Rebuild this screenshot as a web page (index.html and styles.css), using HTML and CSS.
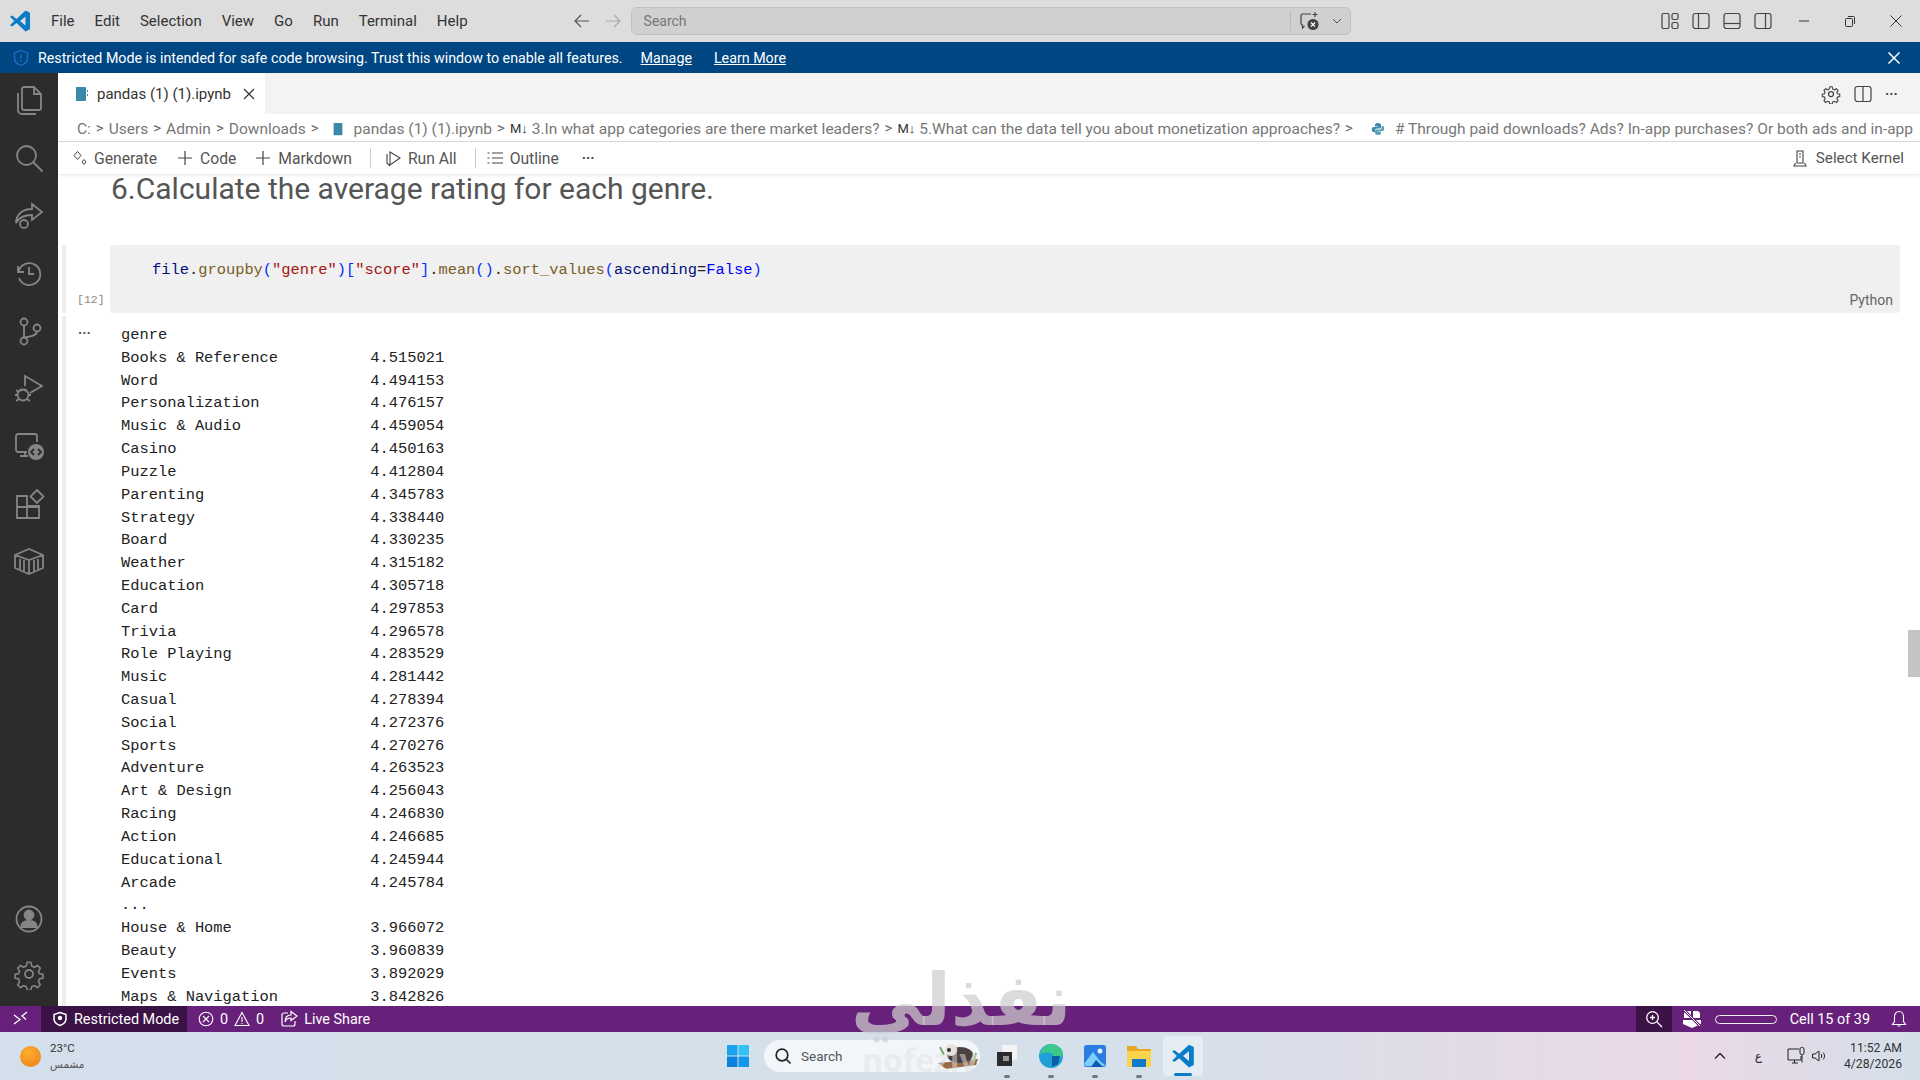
FILE: index.html
```html
<!DOCTYPE html>
<html lang="en">
<head>
  <meta charset="UTF-8" />
  <title>pandas (1) (1).ipynb - Visual Studio Code</title>
  <link rel="stylesheet" href="styles.css">
</head>
<body>
  <!-- title bar -->
  <div class="titlebar">
    <svg class="logo" width="24" height="24" viewBox="0 0 24 24"><path fill="#0a7cc7" d="M17.5 1.5 22 3.7v16.6l-4.500 2.200-9-8.400-4.300 3.300L2 16.300 6.300 12 2 7.700l2.200-1.100 4.300 3.300zM17.500 7.500 12 12l5.500 4.500z"/></svg>
    <div class="menu">
      <span>File</span><span>Edit</span><span>Selection</span><span>View</span><span>Go</span><span>Run</span><span>Terminal</span><span>Help</span>
    </div>
    <svg class="nav-back" width="18" height="18" viewBox="0 0 18 18" fill="none" stroke="#555" stroke-width="1.200"><path d="M16 9H2M8 3 2 9l6 6"/></svg>
    <svg class="nav-fwd" width="18" height="18" viewBox="0 0 18 18" fill="none" stroke="#aaa" stroke-width="1.200"><path d="M2 9h14M10 3l6 6-6 6"/></svg>
    <div class="searchbox">
      <span class="searchbox-text">Search</span>
      <span class="searchbox-sep"></span>
      <svg width="22" height="22" viewBox="0 0 22 22" fill="none" stroke="#444" stroke-width="1.200"><path d="M13 4H4.500A1.500 1.500 0 0 0 3 5.500v8A1.500 1.500 0 0 0 4.500 15v3l2-2"/><path d="M17 2v5M14.500 4.500h5"/><circle cx="15" cy="14.500" r="5" fill="#444"/><path d="m13 12.500 4 4M17 12.500l-4 4" stroke="#fff"/></svg>
      <svg class="searchbox-chev" width="12" height="12" viewBox="0 0 12 12" fill="none" stroke="#555"><path d="m2 4 4 4 4-4"/></svg>
    </div>
    <div class="layout-icons">
      <svg width="20" height="20" viewBox="0 0 20 20" fill="none" stroke="#444" stroke-width="1.200"><rect x="2" y="2.500" width="7" height="15" rx="1.500"/><rect x="12" y="2.500" width="6" height="6" rx="1.500"/><rect x="12" y="11.500" width="6" height="6" rx="1.500"/></svg>
      <svg width="20" height="20" viewBox="0 0 20 20" fill="none" stroke="#444" stroke-width="1.200"><rect x="2" y="2.500" width="16" height="15" rx="2.500"/><path d="M7.500 2.500v15"/></svg>
      <svg width="20" height="20" viewBox="0 0 20 20" fill="none" stroke="#444" stroke-width="1.200"><rect x="2" y="2.500" width="16" height="15" rx="2.500"/><path d="M2 12.500h16"/></svg>
      <svg width="20" height="20" viewBox="0 0 20 20" fill="none" stroke="#444" stroke-width="1.200"><rect x="2" y="2.500" width="16" height="15" rx="2.500"/><path d="M12.500 2.500v15"/></svg>
    </div>
    <div class="window-btns">
      <svg width="14" height="14" viewBox="0 0 14 14" stroke="#333"><path d="M2 7h10"/></svg>
      <svg width="14" height="14" viewBox="0 0 14 14" fill="none" stroke="#333"><rect x="2.500" y="4.500" width="7" height="8" rx="1"/><path d="M5 2.500h5.500a1 1 0 0 1 1 1V10"/></svg>
      <svg width="14" height="14" viewBox="0 0 14 14" stroke="#333"><path d="m1.500 1.500 11 11M12.500 1.500l-11 11"/></svg>
    </div>
  </div>

  <!-- restricted mode banner -->
  <div class="banner">
    <svg width="18" height="18" viewBox="0 0 18 18" fill="none" stroke="#1a6fd0" stroke-width="1.300"><path d="M9 1.500 15.500 4v5c0 3.800-3 6.300-6.500 7.500C5.500 15.300 2.500 12.800 2.500 9V4z"/><path d="M9 5.500v4M9 11v1.500"/></svg>
    <span class="banner-text">Restricted Mode is intended for safe code browsing. Trust this window to enable all features.</span>
    <a class="banner-link">Manage</a>
    <a class="banner-link banner-learn">Learn More</a>
    <svg class="banner-close" width="14" height="14" viewBox="0 0 14 14" stroke="#fff" stroke-width="1.500"><path d="m1.500 1.500 11 11M12.500 1.500l-11 11"/></svg>
  </div>

  <div class="main">
    <!-- activity bar -->
    <div class="activity">
      <div class="act-item"><svg width="32" height="32" viewBox="0 0 32 32"><path d="M11 3h10l7 7v14a2 2 0 0 1-2 2H11a2 2 0 0 1-2-2V5a2 2 0 0 1 2-2zM21 3v7h7M5 9v17a4 4 0 0 0 4 4h14"/></svg></div>
      <div class="act-item"><svg width="32" height="32" viewBox="0 0 32 32"><circle cx="13.500" cy="13.500" r="9.500"/><path d="m20.500 20.500 9 9"/></svg></div>
      <div class="act-item"><svg width="32" height="32" viewBox="0 0 32 32"><path d="M19 5l10 8-10 8v-5C11 16 6 18 3 24c0-8 6-14 16-14z"/><circle cx="11" cy="25" r="4"/></svg></div>
      <div class="act-item"><svg width="32" height="32" viewBox="0 0 32 32"><path d="M5 9v6h6M5.500 15A11 11 0 1 1 6 21"/><path d="M16 10v7h5"/></svg></div>
      <div class="act-item"><svg width="32" height="32" viewBox="0 0 32 32"><circle cx="11" cy="7" r="3.500"/><circle cx="11" cy="26" r="3.500"/><circle cx="24" cy="13" r="3.500"/><path d="M11 10.500v12M24 16.500c0 4-6 5-13 6"/></svg></div>
      <div class="act-item"><svg width="32" height="32" viewBox="0 0 32 32"><path d="M12 14V4l17 10-12 7"/><circle cx="10" cy="23" r="5.500"/><path d="M7 17l2 2M13 17l-2 2M2 23h3M15 23h3M3 29l3-2M17 29l-3-2M3 18l3 2"/></svg></div>
      <div class="act-item"><svg width="32" height="32" viewBox="0 0 32 32"><path d="M14 22H5a2 2 0 0 1-2-2V6a2 2 0 0 1 2-2h17a2 2 0 0 1 2 2v6M12 22v4M7 26h8"/><circle cx="23" cy="22" r="8" fill="#858585" stroke="none"/><path d="m21 19-3 3 3 3M25 19l3 3-3 3" stroke="#2c2c2c"/></svg></div>
      <div class="act-item"><svg width="32" height="32" viewBox="0 0 32 32"><path d="M14 8H4v22h22V18H14zM4 19h22M14 8v22"/><path d="m24 2 6.500 6.500L24 15l-6.500-6.500z"/></svg></div>
      <div class="act-item"><svg width="32" height="32" viewBox="0 0 32 32"><path d="M2 10 16 4l14 6v13l-14 6-14-6zM2 10l14 5 14-5M16 15v14M7 14v11M11 15v12M21 15v12M25 14v11"/></svg></div>
      <div class="act-item act-bottom"><svg width="32" height="32" viewBox="0 0 32 32"><circle cx="16" cy="16" r="12.500"/><circle cx="16" cy="12" r="4.500" fill="#858585"/><path d="M8 25c0-5 3-7 8-7s8 2 8 7" fill="#858585"/></svg></div>
      <div class="act-item"><svg width="32" height="32" viewBox="0 0 32 32"><circle cx="16" cy="16" r="4"/><path d="M14 3h4l1 4 3 1.500 3.500-2 3 3-2 3.500 1 2.500 4 1v4l-4 1-1 3 2 3.500-3 3-3.500-2-3 1-1 4h-4l-1-4-3-1-3.500 2-3-3 2-3.500-1-3-4-1v-4l4-1 1-2.500-2-3.500 3-3 3.500 2 3-1.500z" transform="translate(1.600 1.600) scale(.9)"/></svg></div>
    </div>

    <div class="editor">
      <div class="tabs">
        <div class="tab">
          <svg width="16" height="16" viewBox="0 0 16 16"><path fill="#3d87a8" d="M3 1h9a1 1 0 0 1 1 1v12a1 1 0 0 1-1 1H3z"/><path fill="#3d87a8" d="M14 4h1v2h-1zM14 8h1v2h-1z"/></svg>
          <span>pandas (1) (1).ipynb</span>
          <svg class="tab-close" width="14" height="14" viewBox="0 0 14 14" stroke="#333" stroke-width="1.200"><path d="m2 2 10 10M12 2 2 12"/></svg>
        </div>
        <div class="tab-actions">
          <svg width="20" height="20" viewBox="0 0 32 32" fill="none" stroke="#444" stroke-width="2"><circle cx="16" cy="16" r="4"/><path d="M14 3h4l1 4 3 1.500 3.500-2 3 3-2 3.500 1 2.500 4 1v4l-4 1-1 3 2 3.500-3 3-3.500-2-3 1-1 4h-4l-1-4-3-1-3.500 2-3-3 2-3.500-1-3-4-1v-4l4-1 1-2.500-2-3.500 3-3 3.500 2 3-1.500z" transform="translate(1.600 1.600) scale(.9)"/></svg>
          <svg width="20" height="20" viewBox="0 0 20 20" fill="none" stroke="#444" stroke-width="1.200"><rect x="2" y="2.500" width="16" height="15" rx="2.500"/><path d="M10 2.500v15"/></svg>
          <span class="dots">···</span>
        </div>
      </div>

      <div class="crumbs">
        <span>C:</span><i>&gt;</i><span>Users</span><i>&gt;</i><span>Admin</span><i>&gt;</i><span>Downloads</span><i>&gt;</i>
        <svg class="crumb-nb" width="14" height="14" viewBox="0 0 16 16"><path fill="#3d87a8" d="M3 1h9a1 1 0 0 1 1 1v12a1 1 0 0 1-1 1H3z"/></svg>
        <span>pandas (1) (1).ipynb</span><i>&gt;</i><b>M↓</b><span>3.In what app categories are there market leaders?</span><i>&gt;</i><b>M↓</b><span>5.What can the data tell you about monetization approaches?</span><i>&gt;</i>
        <svg class="crumb-py" width="14" height="14" viewBox="0 0 14 14"><path fill="#3d87a8" d="M7 1C4.500 1 4 2 4 3v1.500h3.200V5H2.500C1.300 5 .8 6 .8 7.500S1.300 10 2.500 10H4V8.300C4 7.300 4.800 6.500 5.800 6.500h2.600C9.300 6.500 10 5.800 10 5V3c0-1-1-2-3-2z"/><path fill="#5b9fba" d="M7 13c2.500 0 3-1 3-2V9.500H6.800V9h4.700c1.200 0 1.700-1 1.700-2.500S12.700 4 11.500 4H10.500v1.700c0 1-.8 1.800-1.800 1.800H6c-.9 0-2 .7-2 1.500v2c0 1 1 2 3 2z"/></svg>
        <span># Through paid downloads? Ads? In-app purchases? Or both ads and in-app</span>
      </div>

      <div class="toolbar">
        <div class="tool tool-gen">
          <svg width="16" height="16" viewBox="0 0 16 16" fill="none" stroke="#444"><path d="m5.500 1.500 3.500 4-3.500 4-3.500-4zM12 9.500l2 2.500-2 2.500-2-2.500z"/></svg>
          <span>Generate</span>
        </div>
        <div class="tool">
          <svg width="18" height="18" viewBox="0 0 18 18" stroke="#444" stroke-width="1.200"><path d="M9 2v14M2 9h14"/></svg>
          <span>Code</span>
        </div>
        <div class="tool">
          <svg width="18" height="18" viewBox="0 0 18 18" stroke="#444" stroke-width="1.200"><path d="M9 2v14M2 9h14"/></svg>
          <span>Markdown</span>
        </div>
        <span class="tool-sep"></span>
        <div class="tool">
          <svg width="18" height="18" viewBox="0 0 18 18" fill="none" stroke="#444" stroke-width="1.100"><path d="M6 3l10 6-10 7zM3 5v9l3 3"/></svg>
          <span>Run All</span>
        </div>
        <span class="tool-sep tool-sep-2"></span>
        <div class="tool">
          <svg width="18" height="18" viewBox="0 0 18 18" stroke="#444" stroke-width="1.200"><path d="M6 4h11M6 9h11M6 14h11M1.500 4h2M1.500 9h2M1.500 14h2"/></svg>
          <span>Outline</span>
        </div>
        <span class="dots tool-dots">···</span>
        <div class="tool tool-kernel">
          <svg width="18" height="18" viewBox="0 0 18 18" fill="none" stroke="#444" stroke-width="1.100"><path d="M6 2h6v12H6zM8 5h2M8 8h2M4.500 14 3 17h12l-1.500-3"/></svg>
          <span>Select Kernel</span>
        </div>
      </div>

      <div class="notebook">
        <h2 class="md-heading">6.Calculate the average rating for each genre.</h2>
        <div class="cell">
          <div class="cell-bar"></div>
          <div class="cell-gutter">[12]</div>
          <div class="cell-code">
            <code><span class="var">file</span>.<span class="fn">groupby</span><span class="br">(</span><span class="str">"genre"</span><span class="br">)[</span><span class="str">"score"</span><span class="br">]</span>.<span class="fn">mean</span><span class="br">()</span>.<span class="fn">sort_values</span><span class="br">(</span><span class="var">ascending</span>=<span class="kw">False</span><span class="br">)</span></code>
            <span class="lang">Python</span>
          </div>
        </div>
        <div class="cell cell-output">
          <div class="cell-bar"></div>
          <div class="cell-gutter out-dots">···</div>
<pre class="output">genre
Books &amp; Reference          4.515021
Word                       4.494153
Personalization            4.476157
Music &amp; Audio              4.459054
Casino                     4.450163
Puzzle                     4.412804
Parenting                  4.345783
Strategy                   4.338440
Board                      4.330235
Weather                    4.315182
Education                  4.305718
Card                       4.297853
Trivia                     4.296578
Role Playing               4.283529
Music                      4.281442
Casual                     4.278394
Social                     4.272376
Sports                     4.270276
Adventure                  4.263523
Art &amp; Design               4.256043
Racing                     4.246830
Action                     4.246685
Educational                4.245944
Arcade                     4.245784
...
House &amp; Home               3.966072
Beauty                     3.960839
Events                     3.892029
Maps &amp; Navigation          3.842826</pre>
        </div>
        <div class="scroll-thumb"></div>
      </div>
    </div>
  </div>

  <!-- status bar -->
  <div class="statusbar">
    <div class="st-remote"><svg width="16" height="16" viewBox="0 0 16 16" fill="none" stroke="#fff" stroke-width="1.300"><path d="m1 13 6-4.500L1 4M14 1 9 5l4 3.500"/></svg></div>
    <div class="st-restricted">
      <svg width="16" height="16" viewBox="0 0 16 16" fill="none" stroke="#fff" stroke-width="1.500"><path d="M8 1.500 14 3.500v4.500c0 3.200-2.800 5.300-6 6.500C4.800 13.300 2 11.200 2 8V3.500z"/><circle cx="8" cy="7" r="1.500" fill="#fff"/></svg>
      <span>Restricted Mode</span>
    </div>
    <div class="st-item st-problems">
      <svg width="16" height="16" viewBox="0 0 16 16" fill="none" stroke="#fff" stroke-width="1.100"><circle cx="8" cy="8" r="6.800"/><path d="m5 5 6 6M11 5l-6 6"/></svg>
      <span>0</span>
      <svg width="16" height="16" viewBox="0 0 16 16" fill="none" stroke="#fff" stroke-width="1.100"><path d="M8 1.500 15 14.500H1zM8 6v5M8 12v1"/></svg>
      <span>0</span>
    </div>
    <div class="st-item st-live">
      <svg width="18" height="18" viewBox="0 0 18 18" fill="none" stroke="#fff" stroke-width="1.200"><path d="M8 3H4a2 2 0 0 0-2 2v9a2 2 0 0 0 2 2h9a2 2 0 0 0 2-2v-3"/><path d="M11 1.500 17 6l-6 4.500V8C8 8 6 9 5 12c0-4 2-7 6-7z"/></svg>
      <span>Live Share</span>
    </div>
    <div class="st-zoom"><svg width="18" height="18" viewBox="0 0 18 18" fill="none" stroke="#fff" stroke-width="1.300"><circle cx="7.500" cy="7.500" r="5.800"/><path d="m12 12 5 5M5 7.500h5M7.500 5v5"/></svg></div>
    <svg class="st-copilot" width="22" height="20" viewBox="0 0 22 20" fill="#fff"><path d="M5 2h5v7H3V4zM12 2h5l2 2v5h-7zM2 11h18v4l-9 4-9-4z"/><path d="M3 1l16 16" stroke="#68217a" stroke-width="2.500"/><path d="M3 1l16 16" stroke="#fff" stroke-width="1"/></svg>
    <div class="st-pill"></div>
    <span class="st-cell">Cell 15 of 39</span>
    <svg class="st-bell" width="18" height="18" viewBox="0 0 18 18" fill="none" stroke="#fff" stroke-width="1.100"><path d="M9 1.500c3 0 4.500 2.500 4.500 5v5l2 3h-13l2-3v-5c0-2.500 1.500-5 4.500-5zM7.500 16h3"/></svg>
  </div>

  <!-- windows taskbar -->
  <div class="taskbar">
    <div class="weather">
      <span class="sun"></span>
      <div class="weather-text">
        <span>23°C</span>
        <span class="weather-sub" lang="ar">مشمس</span>
      </div>
    </div>
    <div class="task-center">
      <svg class="win-logo" width="24" height="24" viewBox="0 0 24 24"><path fill="#1aa3ec" d="M1 1h10.500v10.500H1z"/><path fill="#32c0f7" d="M12.500 1H23v10.500H12.500z"/><path fill="#0c82dc" d="M1 12.500h10.500V23H1z"/><path fill="#1098ea" d="M12.500 12.500H23V23H12.500z"/></svg>
      <div class="task-search">
        <svg width="18" height="18" viewBox="0 0 18 18" fill="none" stroke="#222" stroke-width="1.700"><circle cx="8" cy="8" r="5.800"/><path d="m12.500 12.500 4 4"/></svg>
        <span>Search</span>
        <svg class="task-art" width="44" height="30" viewBox="0 0 44 30"><path d="M2 22 42 18l-2 6-30 4z" fill="#9a6a48"/><ellipse cx="24" cy="14" rx="13" ry="8" fill="#4a4040"/><circle cx="15" cy="9" r="6" fill="#e8e4dc"/><circle cx="13" cy="9" r="2" fill="#333"/><path d="M4 6l4 8M40 12l-3 10" stroke="#7aa85c" stroke-width="2"/></svg>
      </div>
      <div class="task-app">
        <svg width="24" height="24" viewBox="0 0 24 24"><path fill="#f4f4f4" d="M7 1h15v15H7z"/><path fill="#2b2b2b" d="M2 8h15v14H2z"/><path fill="#999" d="M8 12h6v5H8z"/></svg>
        <span class="task-dot"></span>
      </div>
      <div class="task-app">
        <svg width="26" height="26" viewBox="0 0 26 26"><circle cx="13" cy="13" r="12" fill="#1f9ed8"/><path d="M1.500 12C3 5 8 1 13 1c6 0 11 4 12 9 .300 3-3 5-7 5-3 0-4-2-3-4-4-2-11-2-13.500 1z" fill="#3bc88a"/><path d="M14 13h8l-2 8-6 3z" fill="#0b5fa5"/></svg>
        <span class="task-dot"></span>
      </div>
      <div class="task-app">
        <svg width="24" height="24" viewBox="0 0 24 24"><rect x="1" y="1" width="22" height="22" rx="2.500" fill="#2a7de1"/><circle cx="17" cy="7" r="2.500" fill="#dff1ff"/><path d="M1 20 10 8l7 9 6 5H3z" fill="#7cd0f7"/><path d="M8 23l5-7 7 7z" fill="#0f58b8"/></svg>
        <span class="task-dot"></span>
      </div>
      <div class="task-app">
        <svg width="26" height="24" viewBox="0 0 26 24"><path fill="#e9a824" d="M1 2h9l2 3h13v3H1z"/><path fill="#fcd34d" d="M1 7h24v15a1 1 0 0 1-1 1H2a1 1 0 0 1-1-1z"/><path fill="#1279c8" d="M6 15h14v8H6z"/></svg>
        <span class="task-dot"></span>
      </div>
      <div class="task-app task-active">
        <svg width="26" height="26" viewBox="0 0 24 24"><path fill="#0a7cc7" d="M17.500 1.500 22 3.700v16.600l-4.500 2.200-9-8.400-4.300 3.300L2 16.300 6.300 12 2 7.700l2.200-1.100 4.300 3.300zM17.500 7.500 12 12l5.500 4.500z"/></svg>
        <span class="task-bar"></span>
      </div>
    </div>
    <div class="tray">
      <svg width="14" height="14" viewBox="0 0 14 14" fill="none" stroke="#222" stroke-width="1.300"><path d="m2 9.500 5-5 5 5"/></svg>
      <span class="tray-lang" lang="ar">ع</span>
      <svg class="tray-net" width="20" height="20" viewBox="0 0 20 20" fill="none" stroke="#222"><path d="M13 3H2v11h13v-4M6 17h6M8.500 14v3"/><rect x="14" y="1.500" width="4" height="7" rx="1.500"/><path d="M16 8.500v8"/></svg>
      <svg width="16" height="16" viewBox="0 0 16 16" fill="none" stroke="#222"><path d="M1.500 6v4h2.500l4 3V3L4 6zM10 6c1 1 1 3 0 4M12 4.500c2 2 2 5 0 7"/></svg>
      <div class="clock"><span>11:52 AM</span><span>4/28/2026</span></div>
    </div>
  </div>

  <!-- watermark over the page -->
  <div class="wm-ar" lang="ar">نفذلي</div>
  <div class="wm-en">nofezly</div>
</body>
</html>
```

FILE: styles.css
```css
* {
  box-sizing: border-box;
}

body {
  margin: 0;
  width: 1920px;
  height: 1080px;
  overflow: hidden;
  position: relative;
  font-family: Roboto, "Noto Sans", sans-serif;
  font-size: 15px;
  color: #444;
  background: white;
}

svg {
  flex: none;
  display: block;
}

/* title bar */
.titlebar {
  height: 42px;
  background: #dddddd;
  display: flex;
  align-items: center;
}

.logo {
  margin-left: 8px;
}

.menu {
  display: flex;
  margin-left: 19px;
  gap: 20px;
  color: #333;
  font-size: 15px;
}

.nav-back {
  margin-left: 105px;
}

.nav-fwd {
  margin-left: 13px;
}

.searchbox {
  margin-left: 9px;
  width: 720px;
  height: 28px;
  background: #d0d0d0;
  border: 1px solid #c0c0c0;
  border-radius: 6px;
  display: flex;
  align-items: center;
  padding: 0 7px 0 12px;
}

.searchbox-text {
  color: #777;
  font-size: 14px;
  flex: 1;
}

.searchbox-sep {
  width: 1px;
  height: 20px;
  background: #bbb;
  margin-right: 7px;
}

.searchbox-chev {
  margin-left: 11px;
}

.layout-icons {
  display: flex;
  gap: 11px;
  margin-left: 309px;
}

.window-btns {
  display: flex;
  gap: 32px;
  margin-left: 24px;
}

/* banner */
.banner {
  height: 31px;
  background: #004682;
  color: white;
  display: flex;
  align-items: center;
  padding-left: 12px;
  font-size: 14.250px;
}

.banner-text {
  margin-left: 8px;
}

.banner-link {
  margin-left: 18px;
  text-decoration: underline;
}

.banner-learn {
  margin-left: 22px;
}

.banner-close {
  margin-left: auto;
  margin-right: 19px;
}

/* main area */
.main {
  height: 933px;
  display: flex;
}

.activity {
  width: 58px;
  background: #2c2c2c;
  display: flex;
  flex-direction: column;
  padding-bottom: 3px;
}

.act-item {
  height: 57.700px;
  display: flex;
  align-items: center;
  justify-content: center;
}

.act-item:first-child {
  margin-top: -2px;
}

.act-item svg {
  fill: none;
  stroke: #858585;
  stroke-width: 1.800;
}

.act-bottom {
  margin-top: auto;
  margin-bottom: -3px;
}

.editor {
  flex: 1;
  min-width: 0;
  display: flex;
  flex-direction: column;
}

.tabs {
  height: 41px;
  background: #f3f3f3;
  display: flex;
  align-items: center;
}

.tab {
  width: 207px;
  height: 100%;
  background: white;
  display: flex;
  align-items: center;
  padding-left: 15px;
  gap: 8px;
  color: #333;
}

.tab-close {
  margin-left: 3px;
}

.tab-actions {
  margin-left: auto;
  display: flex;
  align-items: center;
  gap: 12px;
  padding-right: 17px;
}

.dots {
  font-weight: bold;
  font-size: 14px;
  color: #444;
  width: 18px;
}

.crumbs {
  height: 28px;
  display: flex;
  align-items: center;
  padding: 2px 0 0 19px;
  white-space: nowrap;
  overflow: hidden;
  color: #777;
  border-bottom: 1px solid #dadada;
  font-size: 15.500px;
}

.crumbs i {
  font-style: normal;
  margin: 0 5px;
  font-size: 15px;
  line-height: 1;
  color: #666;
}

.crumbs b {
  font-weight: 400;
  color: #333;
  margin-right: 4px;
  font-size: 13px;
}

.crumb-nb {
  margin: 0 9px 0 7px;
}

.crumb-py {
  margin: 0 10px 0 13px;
}

.toolbar {
  height: 33px;
  display: flex;
  align-items: center;
  padding-left: 14px;
  border-bottom: 1px solid #eeeeee;
  box-shadow: 0 1px 3px rgba(0, 0, 0, 0.06);
  position: relative;
  background: white;
  font-size: 15.700px;
  color: #555;
}

.tool {
  display: flex;
  align-items: center;
  gap: 6px;
  margin-right: 18px;
}

.tool-gen {
  gap: 6px;
  margin-right: 19px;
}

.tool-sep {
  width: 1px;
  height: 20px;
  background: #ccc;
  margin-right: 13px;
}

.tool-sep-2 {
  margin-right: 10px;
}

.tool-dots {
  margin-left: 5px;
}

.tool-kernel {
  margin-left: auto;
  margin-right: 16px;
  gap: 7px;
  font-size: 15.200px;
}

/* notebook */
.notebook {
  flex: 1;
  min-height: 0;
  position: relative;
}

.md-heading {
  margin: 0 0 42px 53px;
  font-size: 30px;
  font-weight: 400;
  line-height: 28px;
  color: #555;
}

.cell {
  display: flex;
  margin-left: 4px;
  height: 68px;
}

.cell-bar {
  width: 4px;
  background: #ededed;
  flex: none;
}

.cell-gutter {
  width: 44px;
  flex: none;
  padding-left: 11px;
  font-family: "Liberation Mono", monospace;
  font-size: 11.500px;
  color: #888;
  align-self: flex-end;
  margin-bottom: 7px;
}

.cell-code {
  flex: 1;
  margin-right: 20px;
  background: #f0f0f0;
  border-radius: 4px;
  position: relative;
  padding: 15px 0 0 42px;
}

code,
.output {
  font-family: "Liberation Mono", monospace;
  font-size: 15.400px;
  color: #222;
}

.var {
  color: #001080;
}

.fn {
  color: #795e26;
}

.br {
  color: #0431fa;
}

.str {
  color: #a31515;
}

.kw {
  color: #0000ff;
}

.lang {
  position: absolute;
  right: 7px;
  bottom: 5px;
  font-size: 14px;
  color: #666;
}

.cell-output {
  margin-top: 3px;
  height: 690px;
}

.out-dots {
  align-self: flex-start;
  margin: 9px 0 0;
  font-weight: bold;
  font-size: 14px;
  padding-left: 12px;
  font-family: Roboto, sans-serif;
  color: #555;
}

.output {
  margin: 8px 0 0 11px;
  line-height: 22.820px;
}

.scroll-thumb {
  position: absolute;
  right: 0;
  top: 455px;
  width: 12px;
  height: 47px;
  background: #c4c4c4;
}

/* status bar */
.statusbar {
  height: 26px;
  background: #68217a;
  color: white;
  display: flex;
  align-items: center;
  font-size: 14.400px;
  position: relative;
}

.st-remote {
  width: 41px;
  display: flex;
  justify-content: center;
}

.st-restricted {
  width: 146px;
  height: 100%;
  background: #3b1245;
  display: flex;
  align-items: center;
  gap: 6px;
  padding-left: 11px;
}

.st-item {
  display: flex;
  align-items: center;
  gap: 6px;
}

.st-problems {
  margin-left: 11px;
}

.st-live {
  margin-left: 16px;
}

.st-zoom {
  margin-left: auto;
  width: 36px;
  height: 100%;
  background: #3b1245;
  display: flex;
  align-items: center;
  justify-content: center;
}

.st-copilot {
  margin-left: 9px;
}

.st-pill {
  width: 62px;
  height: 9px;
  border: 1px solid #eee;
  border-radius: 5px;
  margin-left: 12px;
}

.st-cell {
  margin-left: 13px;
}

.st-bell {
  margin-left: 20px;
  margin-right: 12px;
}

/* taskbar */
.taskbar {
  height: 48px;
  background: linear-gradient(to right, #d3dfea 0%, #d5e0ea 60%, #ebd9e6 88%, #d3dfea 100%);
  display: flex;
  align-items: center;
  position: relative;
}

.weather {
  display: flex;
  align-items: center;
  margin-left: 20px;
  gap: 9px;
}

.sun {
  width: 21px;
  height: 21px;
  border-radius: 50%;
  background: radial-gradient(circle at 40% 30%, #fbb02c, #ee7a1c);
}

.weather-text {
  display: flex;
  flex-direction: column;
  font-size: 11.500px;
  line-height: 16px;
  color: #333;
}

.weather-sub {
  color: #555;
  font-family: "DejaVu Sans", sans-serif;
  font-size: 10.500px;
}

.task-center {
  position: absolute;
  left: 726px;
  top: 0;
  height: 100%;
  display: flex;
  align-items: center;
}

.task-search {
  margin-left: 14px;
  width: 216px;
  height: 32px;
  border-radius: 16px;
  background: #f2f6fa;
  display: flex;
  align-items: center;
  padding-left: 10px;
  gap: 9px;
  color: #555;
  font-size: 13.500px;
  position: relative;
}

.task-art {
  position: absolute;
  right: 0;
  top: 1px;
}

.task-app {
  width: 44px;
  height: 38px;
  display: flex;
  align-items: center;
  justify-content: center;
  position: relative;
}

.task-app:nth-child(3) {
  margin-left: 5px;
}

.task-dot {
  position: absolute;
  bottom: -3px;
  left: 19px;
  width: 6px;
  height: 3px;
  border-radius: 2px;
  background: #777;
}

.task-active {
  background: #e5edf4;
  border-radius: 4px;
  width: 40px;
  height: 40px;
  margin-left: 2px;
}

.task-bar {
  position: absolute;
  bottom: 0;
  left: 11px;
  width: 18px;
  height: 3px;
  border-radius: 2px;
  background: #0a7cc7;
}

.tray {
  margin-left: auto;
  display: flex;
  align-items: center;
  color: #222;
  padding-right: 18px;
}

.tray-lang {
  margin-left: 28px;
  font-family: "DejaVu Sans", sans-serif;
  font-size: 12px;
}

.tray-net {
  margin: 0 5px 0 24px;
}

.clock {
  display: flex;
  flex-direction: column;
  align-items: flex-end;
  margin-left: 17px;
  font-size: 12.200px;
  line-height: 16.500px;
  color: #333;
}

/* watermark */
.wm-ar {
  position: absolute;
  left: 851px;
  top: 950px;
  font-family: "DejaVu Sans", sans-serif;
  font-weight: bold;
  font-size: 72px;
  line-height: 100px;
  color: rgba(205, 205, 205, 0.72);
}

.wm-en {
  position: absolute;
  left: 862px;
  top: 1040px;
  font-family: "Open Sans", sans-serif;
  font-weight: bold;
  font-size: 32px;
  line-height: 40px;
  color: rgba(225, 225, 225, 0.5);
}
```
